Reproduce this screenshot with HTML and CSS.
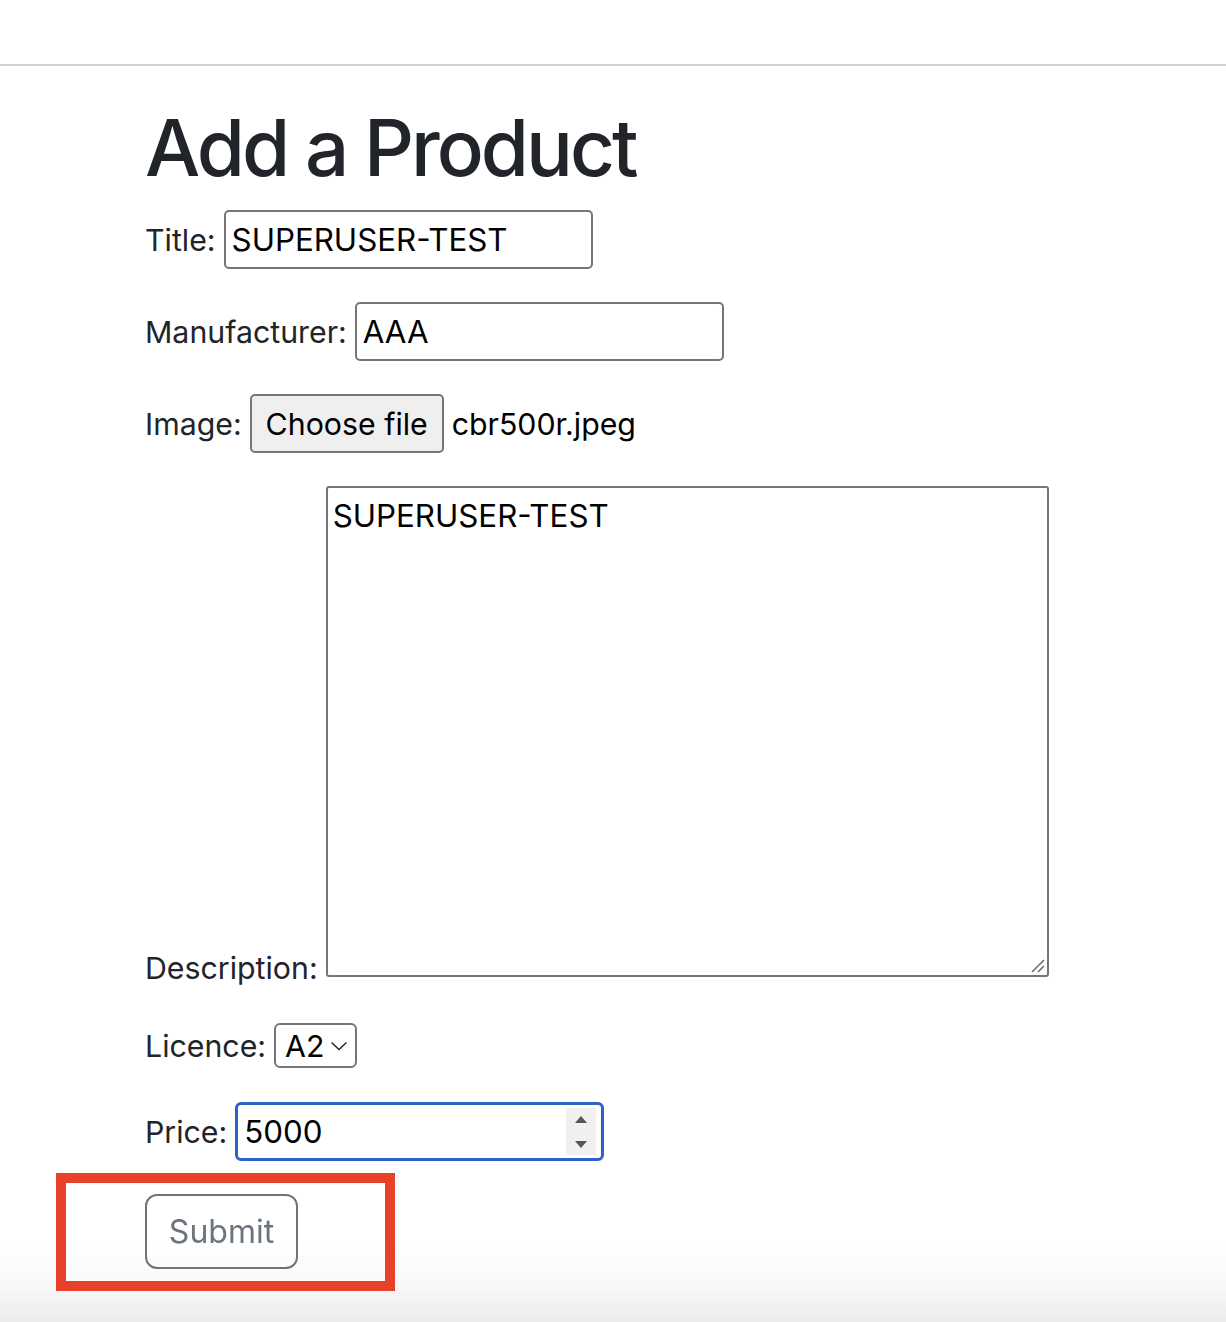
FILE: index.html
```html
<!DOCTYPE html>
<html lang="en">
<head>
<meta charset="utf-8">
<title>Add a Product</title>
<link rel="stylesheet" href="styles.css">
</head>
<body>
<header class="topbar"></header>
<main class="container">
  <h1 class="page-title">Add a Product</h1>
  <form class="product-form">
    <div class="row">
      <label class="lbl">Title:</label>
      <div class="field text-field">SUPERUSER-TEST</div>
    </div>
    <div class="row">
      <label class="lbl">Manufacturer:</label>
      <div class="field text-field">AAA</div>
    </div>
    <div class="row">
      <label class="lbl">Image:</label>
      <div class="file-btn">Choose file</div>
      <span class="file-name">cbr500r.jpeg</span>
    </div>
    <div class="row row-desc">
      <label class="lbl lbl-desc">Description:</label>
      <div class="textarea">
        <span class="ta-text">SUPERUSER-TEST</span>
        <svg class="grip" width="14" height="14" viewBox="0 0 14 14"><path d="M1 13 L13 1 M7 13 L13 7" stroke="#6f6f6f" stroke-width="1.6" fill="none"/></svg>
      </div>
    </div>
    <div class="row row-licence">
      <label class="lbl">Licence:</label>
      <div class="select">
        <span>A2</span>
        <svg class="chev" width="18" height="10" viewBox="0 0 18 10"><path d="M1.5 1.5 L9 8.5 L16.5 1.5" stroke="#222" stroke-width="1.4" fill="none"/></svg>
      </div>
    </div>
    <div class="row row-price">
      <label class="lbl">Price:</label>
      <div class="field number-field">
        <span>5000</span>
        <div class="spinner">
          <svg width="18" height="40" viewBox="0 0 18 40"><path d="M3 11 L9 4 L15 11 Z" fill="#555"/><path d="M3 29 L15 29 L9 36 Z" fill="#555"/></svg>
        </div>
      </div>
    </div>
    <div class="annot">
      <button type="button" class="btn-submit">Submit</button>
    </div>
  </form>
</main>
<div class="bottom-shade"></div>
</body>
</html>
```
FILE: styles.css
```css
html, body {
  margin: 0;
  padding: 0;
  background: #fff;
}
body {
  font-family: Inter, "Noto Sans", sans-serif;
  font-size: 30.3px;
  color: #212529;
  height: 1322px;
  overflow: hidden;
}
.topbar {
  height: 64px;
  border-bottom: 2px solid #d2d2d2;
}
.container {
  padding-left: 145px;
}
.page-title {
  margin: 34px 0 14px 0;
  font-size: 78px;
  font-weight: 500;
  line-height: 96px;
  letter-spacing: -3px;
  color: #212529;
}
.row {
  display: flex;
  align-items: center;
  gap: 8px;
  margin-bottom: 33px;
}
.lbl {
  line-height: 36px;
  white-space: nowrap;
}
.field {
  box-sizing: border-box;
  width: 369px;
  height: 59px;
  border: 2px solid #767676;
  border-radius: 5px;
  color: #000;
  font-size: 31.3px;
  display: flex;
  align-items: center;
  padding-left: 6px;
}
.file-btn {
  box-sizing: border-box;
  width: 194px;
  height: 59px;
  border: 2px solid #767676;
  border-radius: 5px;
  background: #efefef;
  color: #000;
  display: flex;
  align-items: center;
  justify-content: center;
}
.file-name {
  color: #000;
}
.row-desc {
  align-items: flex-end;
  margin-bottom: 46px;
}
.lbl-desc {
  margin-bottom: -9px;
}
.textarea {
  position: relative;
  box-sizing: border-box;
  width: 723px;
  height: 491px;
  border: 2px solid #767676;
  border-radius: 3px;
  color: #000;
  font-size: 31.3px;
  padding: 10px 5px;
  line-height: 36px;
}
.grip {
  position: absolute;
  right: 2px;
  bottom: 2px;
}
.row-licence {
  margin-bottom: 34px;
}
.select {
  box-sizing: border-box;
  width: 83px;
  height: 45px;
  border: 2px solid #767676;
  border-radius: 6px;
  color: #000;
  display: flex;
  align-items: center;
  gap: 6px;
  padding-left: 9px;
}
.chev {
  margin-top: 1px;
}
.row-price {
  margin-bottom: 12px;
}
.number-field {
  border: 3px solid #2d62c6;
  border-radius: 6px;
  padding-left: 6px;
  justify-content: space-between;
  padding-right: 5px;
}
.spinner {
  width: 30px;
  height: 47px;
  background: #f0f0f0;
  display: flex;
  align-items: center;
  justify-content: center;
}
.annot {
  position: relative;
  z-index: 2;
  margin-left: -89px;
  width: 339px;
  height: 118px;
  box-sizing: border-box;
  border: 10px solid #e8412a;
  padding: 11px 0 0 79px;
}
.btn-submit {
  box-sizing: border-box;
  width: 153px;
  height: 75px;
  border: 2px solid #6c757d;
  border-radius: 12px;
  background: transparent;
  color: #6c757d;
  font-family: Inter, "Noto Sans", sans-serif;
  font-size: 32px;
  padding: 0;
}
.bottom-shade {
  position: fixed;
  z-index: 1;
  left: 0;
  right: 0;
  bottom: 0;
  height: 80px;
  pointer-events: none;
  background: linear-gradient(to bottom, rgba(236,236,236,0) 0%, rgba(236,236,236,0.3) 50%, rgba(234,234,234,0.9) 100%);
}
```
